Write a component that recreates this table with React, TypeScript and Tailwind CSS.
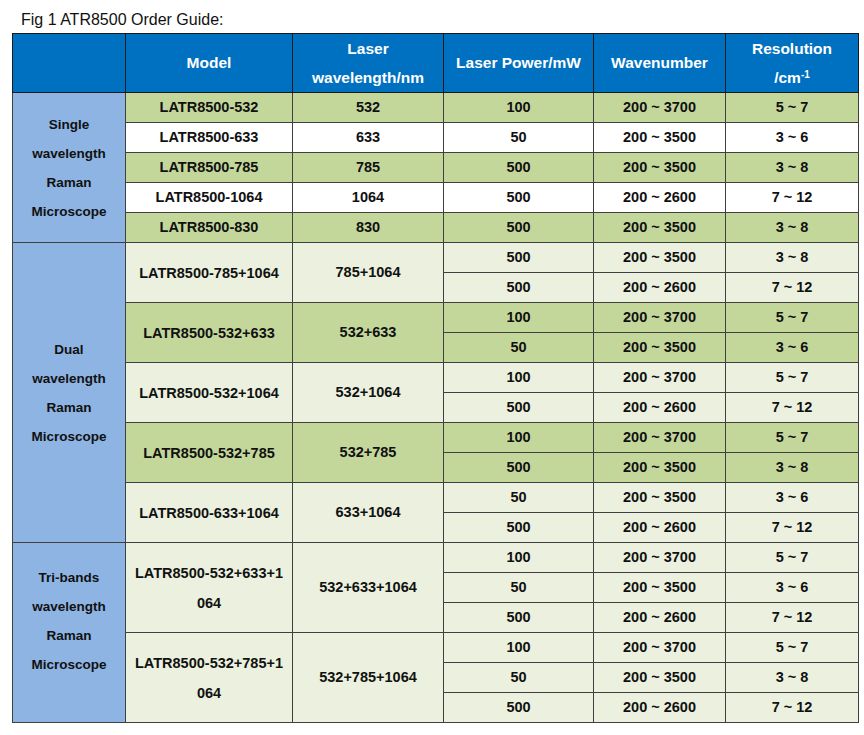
import React from "react";

type Sub = [string, string, string];
type Pair = { model: React.ReactNode; wl: string; rows: Sub[]; bg: string };

const GREEN = "bg-[#c4d79b]";
const LIGHT = "bg-[#ebf1de]";
const WHITE = "bg-white";

const single: { model: string; wl: string; p: string; w: string; r: string; bg: string }[] = [
  { model: "LATR8500-532", wl: "532", p: "100", w: "200 ~ 3700", r: "5 ~ 7", bg: GREEN },
  { model: "LATR8500-633", wl: "633", p: "50", w: "200 ~ 3500", r: "3 ~ 6", bg: WHITE },
  { model: "LATR8500-785", wl: "785", p: "500", w: "200 ~ 3500", r: "3 ~ 8", bg: GREEN },
  { model: "LATR8500-1064", wl: "1064", p: "500", w: "200 ~ 2600", r: "7 ~ 12", bg: WHITE },
  { model: "LATR8500-830", wl: "830", p: "500", w: "200 ~ 3500", r: "3 ~ 8", bg: GREEN },
];

const dual: Pair[] = [
  { model: "LATR8500-785+1064", wl: "785+1064", bg: LIGHT, rows: [["500", "200 ~ 3500", "3 ~ 8"], ["500", "200 ~ 2600", "7 ~ 12"]] },
  { model: "LATR8500-532+633", wl: "532+633", bg: GREEN, rows: [["100", "200 ~ 3700", "5 ~ 7"], ["50", "200 ~ 3500", "3 ~ 6"]] },
  { model: "LATR8500-532+1064", wl: "532+1064", bg: LIGHT, rows: [["100", "200 ~ 3700", "5 ~ 7"], ["500", "200 ~ 2600", "7 ~ 12"]] },
  { model: "LATR8500-532+785", wl: "532+785", bg: GREEN, rows: [["100", "200 ~ 3700", "5 ~ 7"], ["500", "200 ~ 3500", "3 ~ 8"]] },
  { model: "LATR8500-633+1064", wl: "633+1064", bg: LIGHT, rows: [["50", "200 ~ 3500", "3 ~ 6"], ["500", "200 ~ 2600", "7 ~ 12"]] },
];

const tri: Pair[] = [
  {
    model: (
      <>
        LATR8500-532+633+1
        <br />
        064
      </>
    ),
    wl: "532+633+1064",
    bg: LIGHT,
    rows: [["100", "200 ~ 3700", "5 ~ 7"], ["50", "200 ~ 3500", "3 ~ 6"], ["500", "200 ~ 2600", "7 ~ 12"]],
  },
  {
    model: (
      <>
        LATR8500-532+785+1
        <br />
        064
      </>
    ),
    wl: "532+785+1064",
    bg: LIGHT,
    rows: [["100", "200 ~ 3700", "5 ~ 7"], ["50", "200 ~ 3500", "3 ~ 8"], ["500", "200 ~ 2600", "7 ~ 12"]],
  },
];

const td = "border border-[#3f3f3f] text-center align-middle p-0";
const groupCell = "border border-[#3f3f3f] bg-[#8db4e2] text-center align-middle p-0 leading-[29px] text-[13.5px]";

function PairRows({ pairs, group, groupText, span, pb }: { pairs: Pair[]; group: boolean; groupText: React.ReactNode; span: number; pb?: string }) {
  const out: React.ReactNode[] = [];
  pairs.forEach((pair, pi) => {
    pair.rows.forEach((r, ri) => {
      out.push(
        <tr key={`${pi}-${ri}`} className="h-[30px]">
          {group && pi === 0 && ri === 0 && (
            <td rowSpan={span} className={groupCell}>
              <div className={pb}>{groupText}</div>
            </td>
          )}
          {ri === 0 && (
            <>
              <td rowSpan={pair.rows.length} className={`${td} ${pair.bg} leading-[30px]`}>
                {pair.model}
              </td>
              <td rowSpan={pair.rows.length} className={`${td} ${pair.bg}`}>
                {pair.wl}
              </td>
            </>
          )}
          <td className={`${td} ${pair.bg}`}>{r[0]}</td>
          <td className={`${td} ${pair.bg}`}>{r[1]}</td>
          <td className={`${td} ${pair.bg}`}>{r[2]}</td>
        </tr>
      );
    });
  });
  return <>{out}</>;
}

export default function App() {
  return (
    <div className="w-[864px] h-[735px] bg-white" style={{ fontFamily: "'Liberation Sans', Arial, sans-serif" }}>
      <div className="h-[33px] pl-[21px] pt-[10px] text-[16px] leading-[20px] text-[#111]">Fig 1 ATR8500 Order Guide:</div>
      <table className="ml-[12px] w-[846px] table-fixed border-collapse border border-[#3a3a3a] text-[14.5px] font-bold text-[#111]">
        <colgroup>
          <col className="w-[113px]" />
          <col className="w-[167px]" />
          <col className="w-[151px]" />
          <col className="w-[150px]" />
          <col className="w-[132px]" />
          <col className="w-[133px]" />
        </colgroup>
        <thead>
          <tr className="h-[58px] bg-[#0070c0] text-white text-[15.5px]">
            <th className="border border-[#1a1a1a] p-0"></th>
            <th className="border border-[#1a1a1a] p-0">Model</th>
            <th className="border border-[#1a1a1a] p-0 leading-[29px]">
              Laser
              <br />
              wavelength/nm
            </th>
            <th className="border border-[#1a1a1a] p-0">Laser Power/mW</th>
            <th className="border border-[#1a1a1a] p-0">Wavenumber</th>
            <th className="border border-[#1a1a1a] p-0 leading-[29px]">
              Resolution
              <br />
              /cm<sup className="text-[10px] font-bold">-1</sup>
            </th>
          </tr>
        </thead>
        <tbody>
          {single.map((s, i) => (
            <tr key={i} className="h-[30px]">
              {i === 0 && (
                <td rowSpan={5} className={groupCell}>
                  Single
                  <br />
                  wavelength
                  <br />
                  Raman
                  <br />
                  Microscope
                </td>
              )}
              <td className={`${td} ${s.bg}`}>{s.model}</td>
              <td className={`${td} ${s.bg}`}>{s.wl}</td>
              <td className={`${td} ${s.bg}`}>{s.p}</td>
              <td className={`${td} ${s.bg}`}>{s.w}</td>
              <td className={`${td} ${s.bg}`}>{s.r}</td>
            </tr>
          ))}
          <PairRows
            pairs={dual}
            group
            span={10}
            groupText={
              <>
                Dual
                <br />
                wavelength
                <br />
                Raman
                <br />
                Microscope
              </>
            }
          />
          <PairRows
            pairs={tri}
            group
            span={6}
            pb="pb-[24px]"
            groupText={
              <>
                Tri-bands
                <br />
                wavelength
                <br />
                Raman
                <br />
                Microscope
              </>
            }
          />
        </tbody>
      </table>
    </div>
  );
}
